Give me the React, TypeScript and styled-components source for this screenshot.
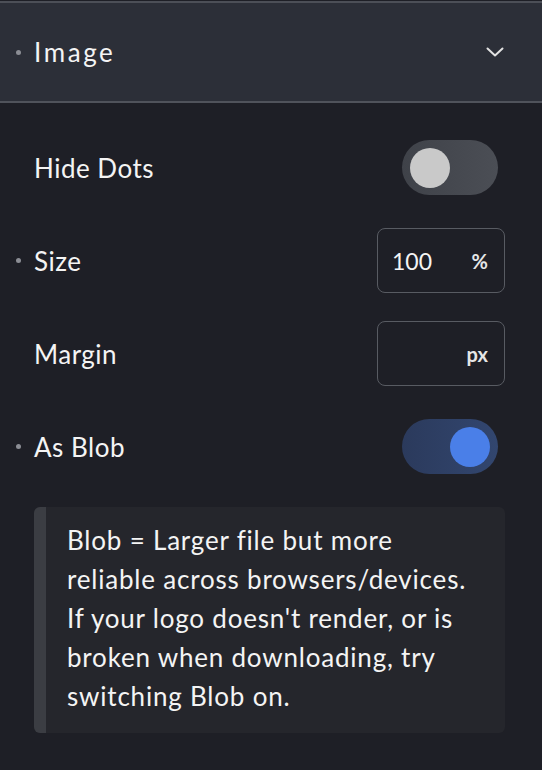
import React from "react";
import styled, { createGlobalStyle } from "styled-components";

const Global = createGlobalStyle`
  html, body { margin: 0; padding: 0; background: #1e1f26; }
  body { font-family: "Lato", "Noto Sans", sans-serif; -webkit-font-smoothing: antialiased; }
`;

const Panel = styled.div`
  width: 542px;
  min-height: 770px;
  background: #1e1f26;
  color: #f4f4f4;
  padding-top: 1px;
  box-sizing: border-box;
`;

const Header = styled.div`
  display: flex;
  align-items: center;
  height: 98px;
  padding: 0 38px 0 16px;
  background: #2c2f38;
  border-top: 2px solid #4c4f57;
  border-bottom: 2px solid #50535b;
`;

const Dot = styled.span<{ $hidden?: boolean }>`
  flex: none;
  width: 5px;
  height: 5px;
  border-radius: 50%;
  background: #8b8d94;
  margin-right: 13px;
  visibility: ${(p) => (p.$hidden ? "hidden" : "visible")};
`;

const Title = styled.span`
  flex: 1;
  font-size: 26px;
  letter-spacing: 2.6px;
  color: #f4f4f4;
`;

const Body = styled.div`
  padding: 18px 37px 0 16px;
`;

const Row = styled.div`
  display: flex;
  align-items: center;
  height: 93px;
`;

const Label = styled.span`
  flex: 1;
  font-size: 26px;
  letter-spacing: 0.5px;
  color: #f4f4f4;
`;

const Track = styled.div<{ $on: boolean }>`
  position: relative;
  width: 96px;
  height: 55px;
  margin-right: 7px;
  border-radius: 28px;
  background: ${(p) =>
    p.$on
      ? "linear-gradient(90deg, #2b3a5c, #32466f)"
      : "linear-gradient(90deg, #3f4249, #4b4e55)"};
`;

const Knob = styled.div<{ $on: boolean }>`
  position: absolute;
  top: 7.5px;
  left: ${(p) => (p.$on ? "48px" : "8px")};
  width: 40px;
  height: 40px;
  border-radius: 50%;
  background: ${(p) => (p.$on ? "#4a7fe8" : "#c9c9c9")};
`;

const InputBox = styled.div`
  display: flex;
  align-items: center;
  width: 128px;
  height: 65px;
  box-sizing: border-box;
  border: 1.5px solid #585b62;
  border-radius: 8px;
  padding: 0 16px 0 14px;
`;

const Value = styled.span`
  flex: 1;
  font-size: 23px;
  color: #f4f4f4;
`;

const Unit = styled.span`
  font-size: 20px;
  font-weight: 700;
  color: #e6e6e6;
`;

const Note = styled.div`
  margin: 14px 0 0 18px;
  display: flex;
  background: #25262c;
  border-radius: 6px;
  overflow: hidden;
`;

const NoteBar = styled.div`
  flex: none;
  width: 12px;
  background: #3b3d43;
`;

const NoteText = styled.p`
  margin: 0;
  padding: 14px 36px 17px 21px;
  font-size: 26px;
  letter-spacing: 0.8px;
  line-height: 39px;
  color: #f4f4f4;
`;

const Chevron = () => (
  <svg width="18" height="10" viewBox="0 0 18 10" fill="none">
    <path d="M1.5 1.5 L9 8.5 L16.5 1.5" stroke="#e2e2e2" strokeWidth="2" strokeLinecap="round" strokeLinejoin="round" />
  </svg>
);

const Toggle = ({ on }: { on: boolean }) => (
  <Track $on={on}>
    <Knob $on={on} />
  </Track>
);

export default function App() {
  return (
    <Panel>
      <Global />
      <Header>
        <Dot />
        <Title>Image</Title>
        <Chevron />
      </Header>
      <Body>
        <Row>
          <Dot $hidden />
          <Label>Hide Dots</Label>
          <Toggle on={false} />
        </Row>
        <Row>
          <Dot />
          <Label>Size</Label>
          <InputBox>
            <Value>100</Value>
            <Unit>%</Unit>
          </InputBox>
        </Row>
        <Row>
          <Dot $hidden />
          <Label>Margin</Label>
          <InputBox>
            <Value></Value>
            <Unit>px</Unit>
          </InputBox>
        </Row>
        <Row>
          <Dot />
          <Label>As Blob</Label>
          <Toggle on={true} />
        </Row>
        <Note>
          <NoteBar />
          <NoteText>
            Blob = Larger file but more reliable across browsers/devices. If your logo doesn't render, or is broken when downloading, try switching Blob on.
          </NoteText>
        </Note>
      </Body>
    </Panel>
  );
}
